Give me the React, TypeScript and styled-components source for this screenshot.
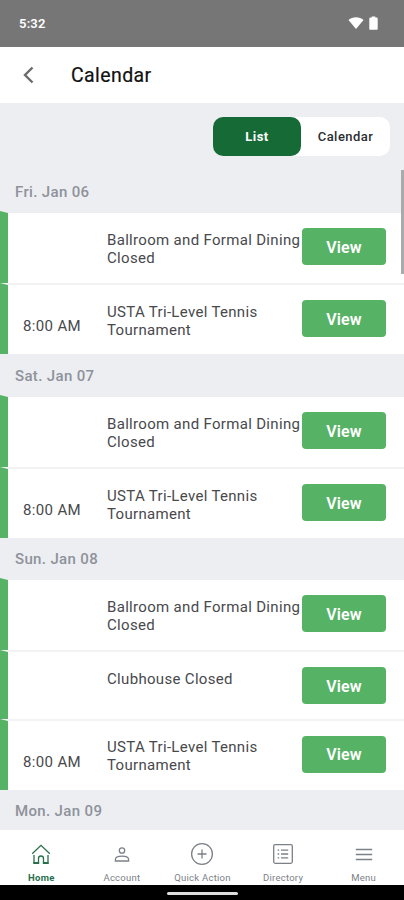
import { useState } from 'react';
import styled, { createGlobalStyle, css } from 'styled-components';

const GlobalStyle = createGlobalStyle`
  * {
    box-sizing: border-box;
  }

  body {
    margin: 0;
    overflow: hidden;
    font-family: Roboto, "Liberation Sans", sans-serif;
  }

  button {
    border: 0;
    padding: 0;
    font-family: inherit;
  }
`;

const Screen = styled.div`
  display: flex;
  flex-direction: column;
  height: 900px;
  background-color: #eceef2;
`;

const StatusBar = styled.div`
  display: flex;
  align-items: center;
  height: 46.5px;
  flex-shrink: 0;
  padding: 0 26px 0 19px;
  background-color: #767676;
  color: #fff;
  font-size: 13px;
  font-weight: 600;
  letter-spacing: 0.2px;
`;

const StatusIcons = styled.div`
  display: flex;
  align-items: center;
  gap: 5px;
  margin-left: auto;

  svg {
    display: block;
  }
`;

const Header = styled.header`
  display: flex;
  align-items: center;
  height: 56px;
  flex-shrink: 0;
  padding-left: 20px;
  background-color: #fff;
`;

const BackButton = styled.button`
  width: 15px;
  height: 24px;
  background: none;
  color: #6b6b6b;

  svg {
    display: block;
  }
`;

const Title = styled.h1`
  margin: 1px 0 0 36px;
  font-size: 19.5px;
  font-weight: 400;
  letter-spacing: 0.4px;
  color: #111;
  -webkit-text-stroke: 0.2px #111;
`;

const Content = styled.main`
  position: relative;
  flex: 1;
  min-height: 0;
  overflow: hidden;
`;

const ToggleWrap = styled.div`
  display: flex;
  justify-content: flex-end;
  height: 68px;
  padding: 14.5px 14px 0 0;
`;

const Toggle = styled.div`
  display: grid;
  grid-template-columns: 88px 89px;
  width: 177px;
  height: 39px;
  border-radius: 10px;
  background-color: #fff;
`;

const ToggleButton = styled.button<{ $active: boolean }>`
  border-radius: 10px;
  background-color: ${({ $active }) => ($active ? '#156a36' : 'transparent')};
  color: ${({ $active }) => ($active ? '#fff' : '#2b2d31')};
  font-size: 13px;
  font-weight: ${({ $active }) => ($active ? 700 : 500)};
  letter-spacing: 0.45px;
`;

const DayHeading = styled.h2<{ $height: number }>`
  display: flex;
  align-items: center;
  height: ${({ $height }) => $height}px;
  margin: 0;
  padding: 2px 0 0 15px;
  font-size: 15px;
  font-weight: 500;
  letter-spacing: 0.35px;
  color: #8f929a;
`;

const EventRow = styled.div<{ $height: number }>`
  display: grid;
  grid-template-columns: 99px 195px 84px;
  align-items: start;
  height: ${({ $height }) => $height}px;
  border-left: 8px solid #56b265;
  border-top: 2px solid #f2f3f5;
  background-color: #fff;

  &:first-of-type {
    border-top-color: #eceef2;
  }
`;

const EventTime = styled.span`
  align-self: center;
  padding: 13px 0 0 15px;
  font-size: 15px;
  line-height: 18px;
  letter-spacing: 0.35px;
  color: #48494c;
`;

const EventName = styled.span`
  padding-top: 17.5px;
  font-size: 15px;
  line-height: 18.3px;
  letter-spacing: 0.32px;
  color: #48494c;
`;

const ViewButton = styled.button`
  height: 37px;
  margin-top: 15.3px;
  padding-top: 1px;
  border-radius: 4px;
  background-color: #56b265;
  color: #fff;
  font-size: 16px;
  font-weight: 600;
  letter-spacing: 0.1px;
`;

const ScrollThumb = styled.div`
  position: absolute;
  top: 67.5px;
  right: 0;
  width: 3px;
  height: 104px;
  background-color: #a9aaab;
`;

const BottomNav = styled.nav`
  display: grid;
  grid-template-columns: repeat(5, 1fr);
  height: 54.5px;
  flex-shrink: 0;
  padding-left: 1px;
  background-color: #fff;
`;

const NavItem = styled.a<{ $active?: boolean }>`
  display: flex;
  flex-direction: column;
  align-items: center;
  padding-top: 12px;
  color: #7c8087;
  font-size: 9.5px;
  line-height: 12px;
  letter-spacing: 0.25px;
  white-space: nowrap;

  svg {
    display: block;
    margin-bottom: 6px;
  }

  ${({ $active }) =>
    $active &&
    css`
      color: #28704c;
      font-weight: 700;
    `}
`;

const GestureBar = styled.div`
  display: flex;
  justify-content: center;
  align-items: center;
  height: 15.5px;
  flex-shrink: 0;
  background-color: #000;

  &::after {
    content: '';
    width: 71px;
    height: 3px;
    margin-top: 2px;
    border-radius: 2px;
    background-color: #ddd;
  }
`;

type IconName = 'home' | 'account' | 'quick' | 'directory' | 'menu';

const NavIcon = ({ name }: { name: IconName }) => (
  <svg width="24" height="24" viewBox="0 0 24 24" fill="none" stroke="currentColor" strokeWidth="1.3">
    {name === 'home' && (
      <>
        <path d="M3.2 11.8 12 3.4l8.8 8.4" />
        <path d="M5 13v8h4.500v-4.500a2.500 2.500 0 0 1 5 0V21H19v-8" />
        <path d="M4.400 21h5.700M13.900 21h5.700" strokeWidth="1.800" />
      </>
    )}
    {name === 'account' && (
      <>
        <circle cx="12" cy="8.500" r="2.700" />
        <path d="M5.400 19v-1.600c0-2 2.700-3.300 6.600-3.300s6.600 1.300 6.600 3.300V19z" />
      </>
    )}
    {name === 'quick' && (
      <>
        <circle cx="12" cy="12" r="10.400" />
        <path d="M12 7.500v9M7.500 12h9" />
      </>
    )}
    {name === 'directory' && (
      <>
        <rect x="2.700" y="2.700" width="18.600" height="18.600" rx="1.500" />
        <path d="M10 8.200h7.200M10 12h7.200M10 15.800h7.200M6.600 8.200h1.600M6.600 12h1.600M6.600 15.800h1.600" />
      </>
    )}
    {name === 'menu' && <path d="M3.800 7.500h16.400M3.800 12.500h16.400M3.800 17.500h16.400" />}
  </svg>
);

interface ClubEvent {
  name: string;
  time?: string;
  height: number;
}

interface Day {
  label: string;
  headingHeight: number;
  events: ClubEvent[];
}

const ballroom: ClubEvent = { name: 'Ballroom and Formal Dining Closed', height: 72 };
const tennis: ClubEvent = { name: 'USTA Tri-Level Tennis Tournament', time: '8:00 AM', height: 71 };

const days: Day[] = [
  { label: 'Fri. Jan 06', headingHeight: 40.5, events: [ballroom, tennis] },
  { label: 'Sat. Jan 07', headingHeight: 41, events: [ballroom, tennis] },
  {
    label: 'Sun. Jan 08',
    headingHeight: 40,
    events: [ballroom, { name: 'Clubhouse Closed', height: 68.5 }, tennis],
  },
  { label: 'Mon. Jan 09', headingHeight: 41, events: [] },
];

const navItems: { label: string; icon: IconName }[] = [
  { label: 'Home', icon: 'home' },
  { label: 'Account', icon: 'account' },
  { label: 'Quick Action', icon: 'quick' },
  { label: 'Directory', icon: 'directory' },
  { label: 'Menu', icon: 'menu' },
];

const App = () => {
  const [view, setView] = useState('List');

  return (
    <>
      <GlobalStyle />
      <Screen>
        <StatusBar>
          5:32
          <StatusIcons>
            <svg width="16" height="14" viewBox="0 0 16 14" fill="#fff">
              <path d="M.500 4C4.500.2 11.500.2 15.500 4L8 13z" />
            </svg>
            <svg width="9" height="14" viewBox="0 0 9 14" fill="#fff">
              <path d="M2.700 0.500h3.600V1.500H7.500q1.200 0 1.200 1.200V13q0 .7-.7.700H1q-.7 0-.7-.7V2.700Q.3 1.500 1.500 1.500h1.200z" />
            </svg>
          </StatusIcons>
        </StatusBar>

        <Header>
          <BackButton aria-label="Back">
            <svg width="15" height="24" viewBox="0 0 15 24" fill="none" stroke="currentColor" strokeWidth="2.400">
              <path d="M12.500 4.500 5 12l7.500 7.500" />
            </svg>
          </BackButton>
          <Title>Calendar</Title>
        </Header>

        <Content>
          <ToggleWrap>
            <Toggle>
              {['List', 'Calendar'].map((option) => (
                <ToggleButton key={option} $active={view === option} onClick={() => setView(option)}>
                  {option}
                </ToggleButton>
              ))}
            </Toggle>
          </ToggleWrap>

          {days.map((day) => (
            <section key={day.label}>
              <DayHeading $height={day.headingHeight}>{day.label}</DayHeading>
              {day.events.map((event) => (
                <EventRow key={event.name} $height={event.height}>
                  <EventTime>{event.time}</EventTime>
                  <EventName>{event.name}</EventName>
                  <ViewButton>View</ViewButton>
                </EventRow>
              ))}
            </section>
          ))}
          <ScrollThumb />
        </Content>

        <BottomNav>
          {navItems.map((item) => (
            <NavItem key={item.label} $active={item.label === 'Home'}>
              <NavIcon name={item.icon} />
              {item.label}
            </NavItem>
          ))}
        </BottomNav>
        <GestureBar />
      </Screen>
    </>
  );
};

export default App;
